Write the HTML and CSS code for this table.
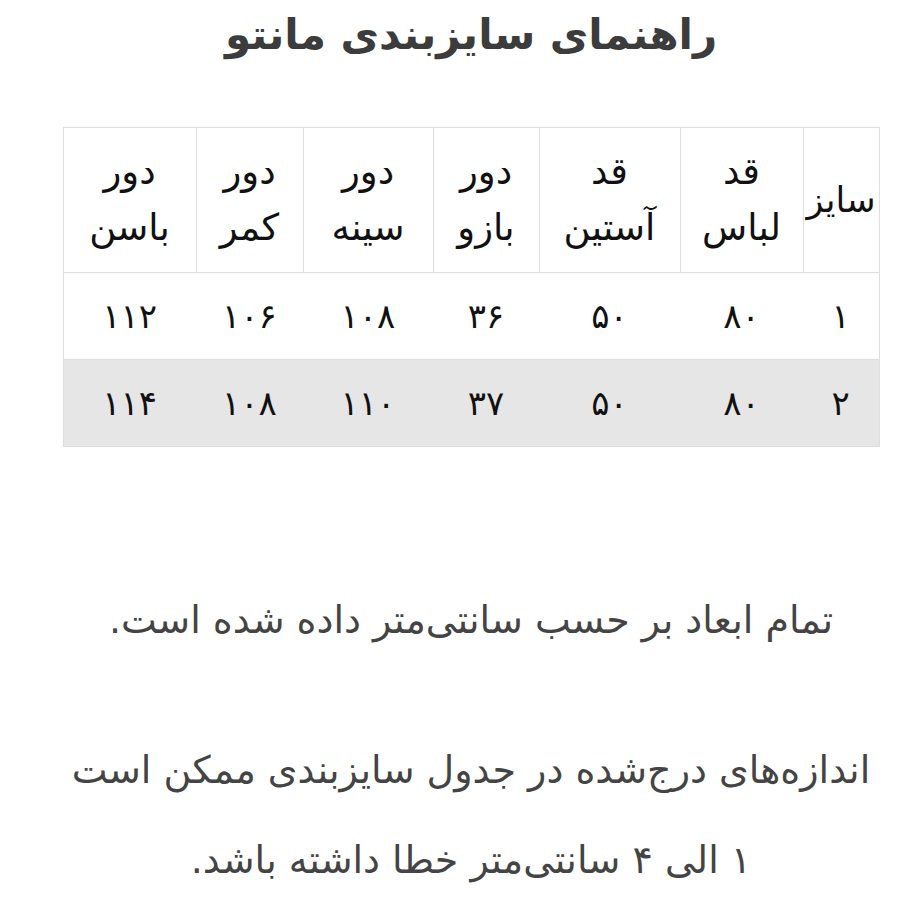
FILE: index.html
```html
<!DOCTYPE html>
<html lang="fa" dir="rtl">
<head>
<meta charset="utf-8">
<link rel="stylesheet" href="styles.css">
</head>
<body>
<div class="page">
  <h1 class="title">راهنمای سایزبندی مانتو</h1>
  <table class="sizes">
    <colgroup>
      <col class="c1"><col class="c2"><col class="c3"><col class="c4"><col class="c5"><col class="c6"><col class="c7">
    </colgroup>
    <thead>
      <tr>
        <th class="single">سایز</th>
        <th>قد<br>لباس</th>
        <th>قد<br>آستین</th>
        <th>دور<br>بازو</th>
        <th>دور<br>سینه</th>
        <th>دور<br>کمر</th>
        <th>دور<br>باسن</th>
      </tr>
    </thead>
    <tbody>
      <tr>
        <td>۱</td><td>۸۰</td><td>۵۰</td><td>۳۶</td><td>۱۰۸</td><td>۱۰۶</td><td>۱۱۲</td>
      </tr>
      <tr class="alt">
        <td>۲</td><td>۸۰</td><td>۵۰</td><td>۳۷</td><td>۱۱۰</td><td>۱۰۸</td><td>۱۱۴</td>
      </tr>
    </tbody>
  </table>
  <p class="note note-first">تمام ابعاد بر حسب سانتی‌متر داده شده است.</p>
  <p class="note note-second">اندازه‌های درج‌شده در جدول سایزبندی ممکن است</p>
  <p class="note note-third">۱ الی ۴ سانتی‌متر خطا داشته باشد.</p>
</div>
</body>
</html>
```

FILE: styles.css
```css
html, body {
  margin: 0;
  padding: 0;
  background: #ffffff;
}
body {
  font-family: "DejaVu Sans", "Noto Sans", sans-serif;
  color: #111;
  padding: 0 21px 0 63px;
}
.page {
  display: flex;
  flex-direction: column;
  align-items: center;
}
.title {
  margin: 6px 0 0 0;
  font-size: 42px;
  line-height: 58px;
  font-weight: bold;
  color: #3c3c3c;
  text-align: center;
}
.sizes {
  margin-top: 63px;
  width: 816px;
  border-collapse: collapse;
  border: 1px solid #dedede;
  table-layout: fixed;
}
.c1 { width: 76px; }
.c2 { width: 123px; }
.c3 { width: 141px; }
.c4 { width: 106px; }
.c5 { width: 130px; }
.c6 { width: 107px; }
.c7 { width: 133px; }
.sizes th {
  height: 144px;
  padding: 0;
  font-weight: normal;
  font-size: 37px;
  line-height: 56px;
  color: #111;
  text-align: center;
  border: 1px solid #dedede;
}
.sizes th.single {
  font-size: 35px;
}
.sizes td {
  height: 86px;
  padding: 0;
  font-size: 34px;
  color: #111;
  text-align: center;
  border-top: 1px solid #dedede;
}
.sizes tr.alt td {
  background: #e6e6e6;
}
.note {
  margin: 0;
  font-size: 38px;
  line-height: 50px;
  color: #444;
  text-align: center;
  width: 100%;
  white-space: nowrap;
}
.note-first { margin-top: 148px; }
.note-second { margin-top: 100px; }
.note-third { margin-top: 40px; }
```
